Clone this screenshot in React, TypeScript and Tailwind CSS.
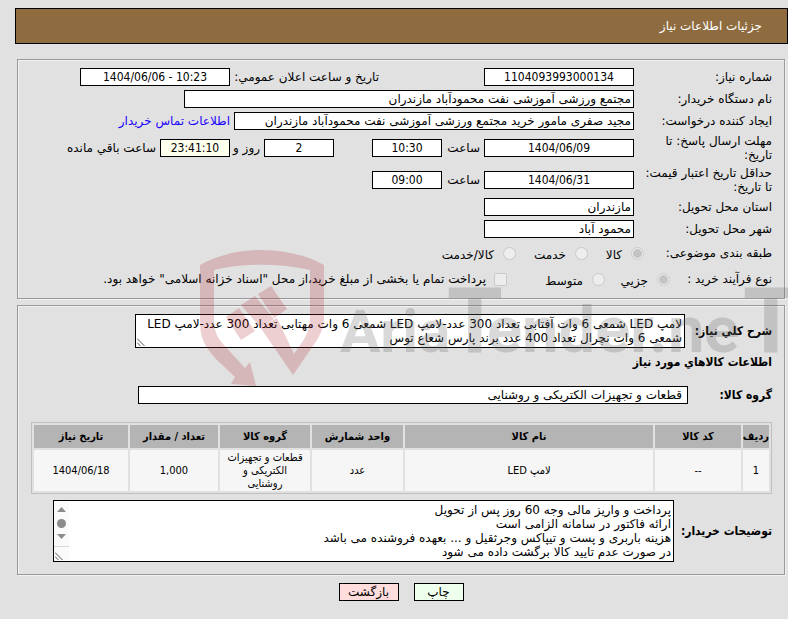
import type { ReactNode } from "react";

const BOX = "h-[18px] shrink-0 border border-black px-0.5 text-[12px] leading-4 text-black outline-none";
const FIELD = `${BOX} bg-white`;
const NUMERIC = "text-center font-['DejaVu_Sans_Condensed','DejaVu_Sans',sans-serif]";
const LABEL = "w-[138px] shrink-0 leading-[14px]";
const BOLD_LABEL = "shrink-0 font-['DejaVu_Sans_Condensed','DejaVu_Sans',sans-serif] font-bold whitespace-nowrap";
const PANEL =
  "border border-[#999] pr-3 pl-3 shadow-[1px_1px_0_#f2f2f2,inset_1px_1px_0_#f2f2f2]";

function Row({ tall = false, children }: { tall?: boolean; children: ReactNode }) {
  return <div className={`flex items-center whitespace-nowrap ${tall ? "h-8" : "h-[22px]"}`}>{children}</div>;
}

function Choice({ id, name, label, width, checked = false }: { id: string; name: string; label: string; width: string; checked?: boolean }) {
  return (
    <span className="flex items-center gap-[9px]">
      <input
        id={id}
        type="radio"
        name={name}
        defaultChecked={checked}
        disabled
        className="size-[13px] shrink-0 appearance-none rounded-full border border-[#c9c9c9] bg-[#ededed] checked:bg-[radial-gradient(circle,#c4c4c4_0_4px,#ededed_5px)]"
      />
      <label htmlFor={id} className={`pt-1 ${width}`}>
        {label}
      </label>
    </span>
  );
}

function Grip() {
  return (
    <svg className="absolute bottom-0.5 left-0.5 size-2" viewBox="0 0 8 8" stroke="#555" strokeWidth="1" aria-hidden="true">
      <path d="M0 0.500L7.500 8M0 4.500L3.500 8" />
    </svg>
  );
}

function Watermark() {
  return (
    <div aria-hidden="true" className="pointer-events-none absolute top-[249px] left-[199px] flex w-[589px] overflow-hidden" dir="ltr">
      <svg className="h-[140px] w-[127px] shrink-0" viewBox="0 0 127 140" fill="#b01e28" fillOpacity="0.21">
        <path d="M1 16C37-4 89-4 125 16V66C125 78 122 85 116 94L94 126L61 78L78 69L95 105L104 92C109 84 111 77 111 68V21C80 14 46 14 15 21V70C15 80 17 87 24 95L46 119L51 113L57 137L32 135L36 128L18 111C6 98 1 90 1 72Z" />
        <path d="M27 68L40 59L56 82L42 91ZM42 56L56 47L75 70L61 78ZM59 45L72 37L88 60L75 69Z" />
      </svg>
      <div className="mt-[35px] ml-[14px] flex items-baseline font-['Roboto','Liberation_Sans',sans-serif] leading-[76px] font-bold whitespace-nowrap text-[#666]/25">
        <span className="w-[107px] text-[60px]">Aria</span>
        <span className="w-[40px] text-[90px]">T</span>
        <span className="w-[256px] text-[65px]">ender.ne</span>
        <span className="text-[90px]">T</span>
      </div>
    </div>
  );
}

const COLUMNS = [
  { title: "ردیف", width: "w-[26px]", value: "1" },
  { title: "کد کالا", width: "w-[86px]", value: "--" },
  { title: "نام کالا", width: "", value: "لامپ LED" },
  { title: "واحد شمارش", width: "w-[91px]", value: "عدد" },
  { title: "گروه کالا", width: "w-[90px]", value: "قطعات و تجهیزات الکتریکی و روشنایی" },
  { title: "تعداد / مقدار", width: "w-[88px]", value: "1,000" },
  { title: "تاریخ نیاز", width: "w-[94px]", value: "1404/06/18" },
];

export default function App() {
  return (
    <div
      dir="rtl"
      className="relative min-h-screen bg-[#e1e1e1] pt-2 pr-[3px] pl-[17px] font-['DejaVu_Sans',sans-serif] text-[12px] text-black"
    >
      <header className="-mr-[3px] -ml-0.5 flex h-9 items-center border border-black bg-[#8e6c40] pr-[25px] text-white">
        <h1>جزئیات اطلاعات نیاز</h1>
      </header>

      <section className={`mt-[15px] py-1.5 ${PANEL}`}>
        <Row>
          <label htmlFor="number" className={LABEL}>شماره نیاز:</label>
          <input id="number" readOnly dir="ltr" defaultValue="1104093993000134" className={`${FIELD} ${NUMERIC} w-[150px]`} />
          <label htmlFor="announced" className="mr-[105px] ml-1 w-[145px]">تاریخ و ساعت اعلان عمومي:</label>
          <input id="announced" readOnly dir="ltr" defaultValue="1404/06/06 - 10:23" className={`${FIELD} ${NUMERIC} w-[150px]`} />
        </Row>
        <Row>
          <label htmlFor="buyer" className={LABEL}>نام دستگاه خریدار:</label>
          <input id="buyer" readOnly defaultValue="مجتمع ورزشی آموزشی نفت محمودآباد مازندران" className={`${FIELD} w-[450px]`} />
        </Row>
        <Row>
          <label htmlFor="creator" className={LABEL}>ایجاد کننده درخواست:</label>
          <input id="creator" readOnly defaultValue="مجید صفری مامور خرید مجتمع ورزشی آموزشی نفت محمودآباد مازندران" className={`${FIELD} w-[400px]`} />
          <a href="#contact" className="mr-1 text-[#1a00ff]">اطلاعات تماس خریدار</a>
        </Row>
        <Row tall>
          <label htmlFor="deadline" className={LABEL}>مهلت ارسال پاسخ: تا<br />تاریخ:</label>
          <input id="deadline" readOnly dir="ltr" defaultValue="1404/06/09" className={`${FIELD} ${NUMERIC} w-[150px]`} />
          <label htmlFor="deadline-time" className="mx-1 w-[34px]">ساعت</label>
          <input id="deadline-time" readOnly dir="ltr" defaultValue="10:30" className={`${FIELD} ${NUMERIC} w-[70px]`} />
          <input id="days" readOnly defaultValue="2" className={`${FIELD} ${NUMERIC} mr-[38px] w-[70px]`} />
          <label htmlFor="days" className="mx-1 w-[26px]">روز و</label>
          <input id="remaining" readOnly dir="ltr" defaultValue="23:41:10" className={`${BOX} ${NUMERIC} w-[70px] bg-[#ffffee]`} />
          <label htmlFor="remaining" className="mr-1">ساعت باقي مانده</label>
        </Row>
        <Row tall>
          <label htmlFor="validity" className={LABEL}>حداقل تاریخ اعتبار قیمت:<br />تا تاریخ:</label>
          <input id="validity" readOnly dir="ltr" defaultValue="1404/06/31" className={`${FIELD} ${NUMERIC} w-[150px]`} />
          <label htmlFor="validity-time" className="mx-1 w-[34px]">ساعت</label>
          <input id="validity-time" readOnly dir="ltr" defaultValue="09:00" className={`${FIELD} ${NUMERIC} w-[70px]`} />
        </Row>
        <Row>
          <label htmlFor="province" className={LABEL}>استان محل تحویل:</label>
          <input id="province" readOnly defaultValue="مازندران" className={`${FIELD} w-[150px]`} />
        </Row>
        <Row>
          <label htmlFor="city" className={LABEL}>شهر محل تحویل:</label>
          <input id="city" readOnly defaultValue="محمود آباد" className={`${FIELD} w-[150px]`} />
        </Row>
        <div className="flex h-[26px] items-center whitespace-nowrap">
          <span className="w-32 shrink-0">طبقه بندی موضوعی:</span>
          <div className="flex gap-[18px]">
            <Choice id="goods" name="category" label="کالا" width="w-4" checked />
            <Choice id="service" name="category" label="خدمت" width="w-8" />
            <Choice id="both" name="category" label="کالا/خدمت" width="" />
          </div>
        </div>
        <div className="flex h-[26px] items-center whitespace-nowrap">
          <span className="w-[102px] shrink-0">نوع فرآیند خرید :</span>
          <div className="flex gap-[15px]">
            <Choice id="small" name="process" label="جزیي" width="w-7" checked />
            <Choice id="medium" name="process" label="متوسط" width="w-9" />
          </div>
          <input id="treasury" type="checkbox" disabled className="mr-10 size-[13px] shrink-0 appearance-none rounded-[2px] border border-[#c9c9c9] bg-[#ededed]" />
          <label htmlFor="treasury" className="mr-2">
            پرداخت تمام یا بخشی از مبلغ خرید،از محل "اسناد خزانه اسلامی" خواهد بود.
          </label>
        </div>
      </section>

      <section className={`mt-1.5 pt-2 pb-3 ${PANEL}`}>
        <div className="flex items-center">
          <label htmlFor="summary" className={`${BOLD_LABEL} w-[87px]`}>شرح کلي نیاز:</label>
          <div className="relative h-[34px] w-[550px]">
            <textarea
              id="summary"
              readOnly
              className="block size-full resize-none overflow-hidden border border-black bg-white p-0.5 text-[12px] leading-[14px] whitespace-pre outline-none"
              defaultValue={"لامپ LED شمعی 6 وات آفتابی تعداد 300 عدد-لامپ LED شمعی 6 وات مهتابی تعداد 300 عدد-لامپ LED\nشمعی 6 وات نچرال تعداد 400 عدد برند پارس شعاع توس"}
            />
            <Grip />
          </div>
        </div>
        <h2 className={`${BOLD_LABEL} mt-[5px] leading-[18px]`}>اطلاعات کالاهاي مورد نیاز</h2>
        <div className="mt-[15px] flex items-center">
          <label htmlFor="group" className={`${BOLD_LABEL} w-[84px]`}>گروه کالا:</label>
          <input id="group" readOnly defaultValue="قطعات و تجهیزات الکتریکی و روشنایی" className={`${FIELD} w-[550px] pr-[5px]`} />
        </div>
        <div className="mt-[18px] pl-px">
          <table className="w-full table-fixed border-separate border-spacing-0.5 border border-[#c0c0c0] text-center font-['DejaVu_Sans_Condensed','DejaVu_Sans',sans-serif] text-[11px] leading-[13px]">
            <thead>
              <tr>
                {COLUMNS.map((c) => (
                  <th key={c.title} className={`h-[23px] bg-[#b4b4b4] p-0 whitespace-nowrap ${c.width}`}>{c.title}</th>
                ))}
              </tr>
            </thead>
            <tbody>
              <tr>
                {COLUMNS.map((c) => (
                  <td key={c.title} className="h-[41px] bg-[#f6f6f6] px-1 py-0">{c.value}</td>
                ))}
              </tr>
            </tbody>
          </table>
        </div>
        <div className="mt-1.5 flex items-center">
          <label htmlFor="notes" className={`${BOLD_LABEL} w-[98px]`}>توضیحات خریدار:</label>
          <div className="relative h-[62px] w-[621px]">
            <textarea
              id="notes"
              readOnly
              className="block size-full resize-none overflow-hidden border border-black bg-white p-0.5 text-[12px] leading-[14px] outline-none"
              defaultValue={"پرداخت و واریز مالی وجه 60 روز پس از تحویل\nارائه فاکتور در سامانه الزامی است\nهزینه باربری و پست و تیپاکس وجرثقیل و ... بعهده فروشنده می باشد\nدر صورت عدم تایید کالا برگشت داده می شود"}
            />
            <svg className="absolute top-px left-px h-[60px] w-[15px]" viewBox="0 0 15 60" fill="#8b8b8b" aria-hidden="true">
              <path d="M0 0H15V60H0Z" fill="#fafafa" />
              <path d="M7.500 6L12 11H3ZM7.500 38L12 33H3Z" />
              <circle cx="7.500" cy="22.500" r="4.500" />
              <path d="M0 45H15V46H0Z" fill="#d8d8d8" />
            </svg>
            <Grip />
          </div>
        </div>
      </section>

      <div className="mt-2 flex justify-center gap-[15px]">
        <button type="button" className="h-[18px] w-[50px] border border-black bg-[#eeffee] leading-4">چاپ</button>
        <button type="button" className="h-[18px] w-[60px] border border-black bg-[#ffdddd] leading-4">بازگشت</button>
      </div>

      <Watermark />
    </div>
  );
}
